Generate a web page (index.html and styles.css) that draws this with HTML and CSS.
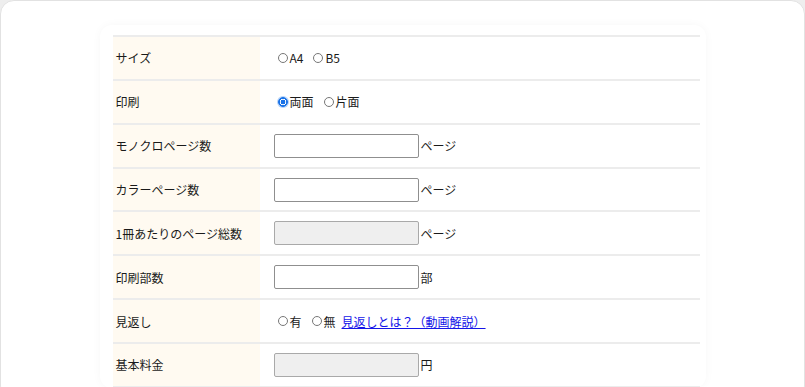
FILE: index.html
```html
<!DOCTYPE html>
<html lang="ja">
<head>
<meta charset="utf-8">
<link rel="stylesheet" href="styles.css">
</head>
<body>
<div class="frame">
  <div class="panel">
    <table class="form">
      <tr>
        <th>サイズ</th>
        <td><div class="cell"><label class="opt"><input type="radio" name="size">A4</label><label class="opt"><input type="radio" name="size">B5</label></div></td>
      </tr>
      <tr>
        <th>印刷</th>
        <td><div class="cell"><label class="opt"><input type="radio" name="print" checked>両面</label><label class="opt"><input type="radio" name="print">片面</label></div></td>
      </tr>
      <tr>
        <th>モノクロページ数</th>
        <td><div class="cell"><input class="field" type="text">ページ</div></td>
      </tr>
      <tr>
        <th>カラーページ数</th>
        <td><div class="cell"><input class="field" type="text">ページ</div></td>
      </tr>
      <tr>
        <th>1冊あたりのページ総数</th>
        <td><div class="cell"><input class="field" type="text" disabled>ページ</div></td>
      </tr>
      <tr>
        <th>印刷部数</th>
        <td><div class="cell"><input class="field" type="text">部</div></td>
      </tr>
      <tr>
        <th>見返し</th>
        <td><div class="cell"><label class="opt"><input type="radio" name="mikaeshi">有</label><label class="opt"><input type="radio" name="mikaeshi">無</label><a class="help" href="#">見返しとは？（動画解説）</a></div></td>
      </tr>
      <tr>
        <th>基本料金</th>
        <td><div class="cell"><input class="field" type="text" disabled>円</div></td>
      </tr>
    </table>
  </div>
</div>
</body>
</html>
```
FILE: styles.css
```css
html, body {
  margin: 0;
  padding: 0;
  background: #eeeeee;
}
body {
  font-family: "Noto Sans CJK JP", "Noto Sans", sans-serif;
  font-size: 12px;
  color: #1a1a1a;
  overflow: hidden;
}
.frame {
  box-sizing: border-box;
  width: 805px;
  height: 400px;
  background: #fff;
  border: 1px solid #e2e2e2;
  border-radius: 14px;
  padding-top: 24px;
}
.panel {
  width: 606px;
  margin: 0 auto;
  padding: 10px 6px 0 13px;
  box-sizing: border-box;
  background: #fff;
  border-radius: 12px;
  box-shadow: 0 0 10px rgba(0, 0, 0, 0.035);
}
.form {
  width: 587px;
  border-collapse: collapse;
  border-top: 2px solid #ececec;
}
.form tr {
  border-bottom: 2px solid #ececec;
}
.form th {
  width: 144px;
  height: 41.86px;
  padding: 0 0 0 3px;
  background: #fffaf1;
  text-align: left;
  font-weight: normal;
  vertical-align: middle;
}
.form td {
  height: 41.86px;
  padding: 0 0 0 14px;
  vertical-align: middle;
  white-space: nowrap;
}
.cell {
  display: flex;
  align-items: center;
}
.opt {
  display: inline-flex;
  align-items: center;
  margin-right: 6px;
}
.opt input {
  appearance: none;
  -webkit-appearance: none;
  width: 10px;
  height: 10px;
  margin: 0 2px 0 4px;
  border: 1px solid #777;
  border-radius: 50%;
  background: #fff;
  box-sizing: border-box;
}
.opt input:checked {
  border-color: #1a73e8;
  background: radial-gradient(circle, #1a73e8 0 2.2px, #fff 2.6px 3px, #1a73e8 3.4px);
  box-shadow: 0 0 0 1px #b8d4f8;
}
.field {
  box-sizing: border-box;
  width: 145px;
  height: 24px;
  margin: 0 2px 0 0;
  padding: 2px 4px;
  border: 1px solid #8f8f8f;
  border-radius: 2px;
  background: #fff;
  font: inherit;
}
.field:disabled {
  background: #efefef;
  border-color: #a9a9a9;
}
.help {
  color: #1515e8;
  text-decoration: underline;
}
```
